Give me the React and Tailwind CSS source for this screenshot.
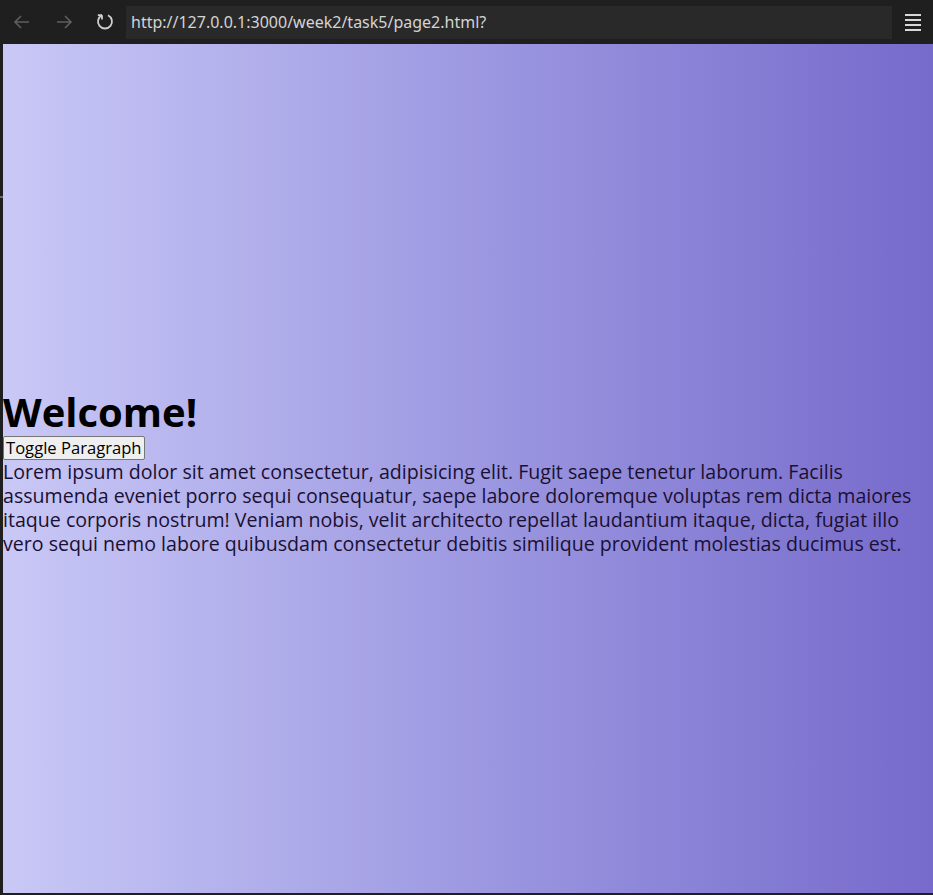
import React, { useState } from "react";

const page = { fontFamily: "'Open Sans', Lato, sans-serif" };
const chrome = { fontFamily: "'Noto Sans', 'Open Sans', sans-serif" };

export default function App() {
  const [show, setShow] = useState(true);

  return (
    <div className="w-[933px] h-[895px] flex flex-col bg-[#1f1f1f] overflow-hidden">
      {/* browser bar */}
      <div className="h-[44px] flex items-center shrink-0">
        <div className="w-[44px] flex justify-center text-[#5f5f5f]">
          <svg width="20" height="20" viewBox="0 0 20 20" fill="none" stroke="currentColor" strokeWidth="1.6">
            <path d="M17 10H3M9 4l-6 6 6 6" />
          </svg>
        </div>
        <div className="w-[40px] flex justify-center text-[#5f5f5f]">
          <svg width="20" height="20" viewBox="0 0 20 20" fill="none" stroke="currentColor" strokeWidth="1.6">
            <path d="M3 10h14M11 4l6 6-6 6" />
          </svg>
        </div>
        <div className="w-[42px] flex justify-center text-[#cfcfcf]">
          <svg width="20" height="20" viewBox="0 0 20 20" fill="none" stroke="currentColor" strokeWidth="1.8">
            <path d="M7 3.2A7 7 0 1 0 13 3.2" />
            <path d="M7 3.2V7.5M7 3.2H2.8" />
          </svg>
        </div>
        <div className="h-[33px] w-[766px] bg-[#292929] flex items-center px-[5px] text-[16px] text-[#d4d4d4]" style={chrome}>
          http://127.0.0.1:3000/week2/task5/page2.html?
        </div>
        <div className="flex-1 flex justify-center">
          <div className="flex flex-col gap-[3px]">
            <div className="w-[16px] h-[2px] bg-[#d8d8d8]" />
            <div className="w-[16px] h-[2px] bg-[#d8d8d8]" />
            <div className="w-[16px] h-[2px] bg-[#d8d8d8]" />
            <div className="w-[16px] h-[2px] bg-[#d8d8d8]" />
          </div>
        </div>
      </div>

      {/* page */}
      <div className="flex flex-1 pb-[2px]">
        <div className="w-[3px] shrink-0 flex flex-col">
          <div className="h-[152px]" />
          <div className="h-[2px] bg-[#6a6a6a]" />
        </div>
        <div
          className="flex-1 flex flex-col justify-center pt-[6px] bg-gradient-to-r from-[#c9c8f6] to-[#766acb] text-black"
          style={page}
        >
          <h1 className="text-[40px] font-bold leading-[48px]">Welcome!</h1>
          <div>
            <button
              onClick={() => setShow(!show)}
              className="bg-[#efefef] border border-[#767676] rounded-[2px] px-[2px] h-[24px] text-[16.6px] leading-[20px] text-black"
            >
              Toggle Paragraph
            </button>
          </div>
          {show && (
            <p className="text-[19.6px] leading-[24px] text-[#1a1033] whitespace-nowrap">
              Lorem ipsum dolor sit amet consectetur, adipisicing elit. Fugit saepe tenetur laborum. Facilis
              <br />
              assumenda eveniet porro sequi consequatur, saepe labore doloremque voluptas rem dicta maiores
              <br />
              itaque corporis nostrum! Veniam nobis, velit architecto repellat laudantium itaque, dicta, fugiat illo
              <br />
              vero sequi nemo labore quibusdam consectetur debitis similique provident molestias ducimus est.
            </p>
          )}
        </div>
      </div>
    </div>
  );
}
